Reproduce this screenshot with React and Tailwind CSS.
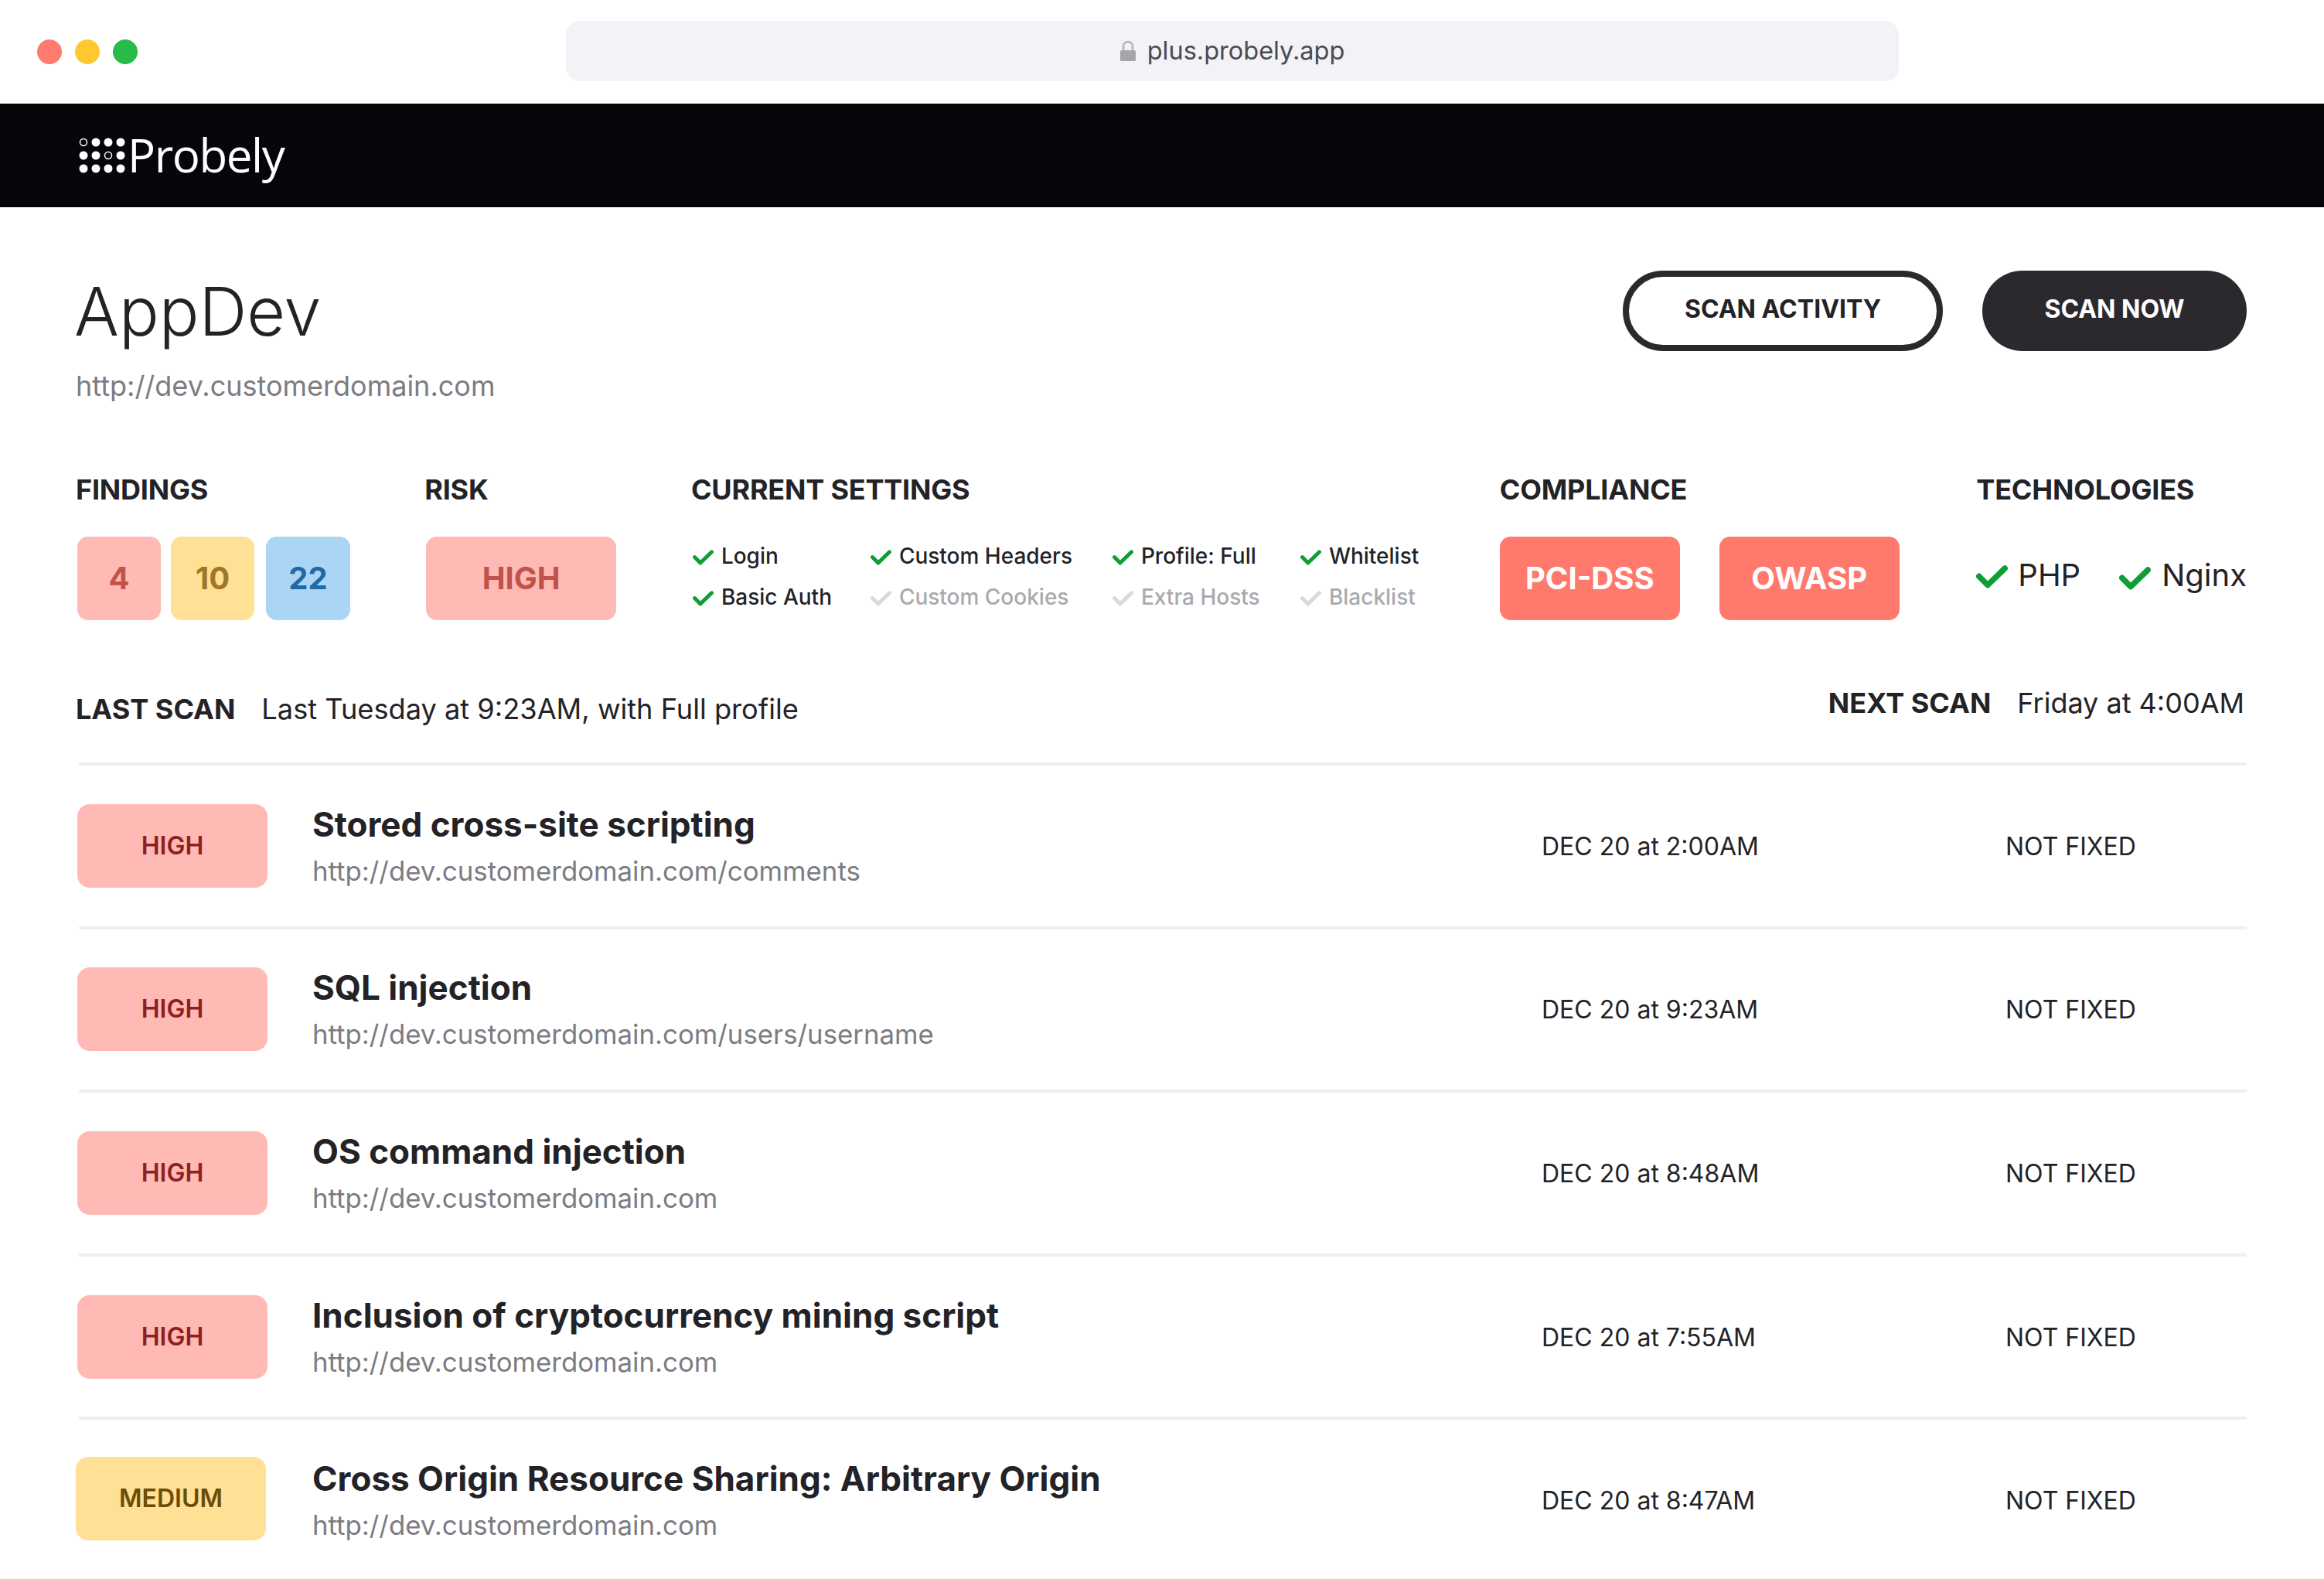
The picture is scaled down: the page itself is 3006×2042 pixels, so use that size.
const findings = [
  { title: "Stored cross-site scripting", url: "http://dev.customerdomain.com/comments", date: "DEC 20 at 2:00AM" },
  { title: "SQL injection", url: "http://dev.customerdomain.com/users/username", date: "DEC 20 at 9:23AM" },
  { title: "OS command injection", url: "http://dev.customerdomain.com", date: "DEC 20 at 8:48AM" },
  { title: "Inclusion of cryptocurrency mining script", url: "http://dev.customerdomain.com", date: "DEC 20 at 7:55AM" },
  { title: "Cross Origin Resource Sharing: Arbitrary Origin", url: "http://dev.customerdomain.com", date: "DEC 20 at 8:47AM", medium: true },
];

const settings = [
  { width: "w-[230px]", items: [{ label: "Login", on: true }, { label: "Basic Auth", on: true }] },
  { width: "w-[313px]", items: [{ label: "Custom Headers", on: true }, { label: "Custom Cookies", on: false }] },
  { width: "w-[243px]", items: [{ label: "Profile: Full", on: true }, { label: "Extra Hosts", on: false }] },
  { width: "w-[200px]", items: [{ label: "Whitelist", on: true }, { label: "Blacklist", on: false }] },
];

const Check = ({ on = true, className }) => (
  <svg viewBox="0 0 41 30" className={className}>
    <path
      d="M3.8 14.3 L15 25.6 L37.2 4"
      fill="none"
      stroke={on ? "#0f9d35" : "#d9d9dd"}
      strokeWidth="7.5"
      strokeLinecap="round"
      strokeLinejoin="round"
    />
  </svg>
);

const Logo = () => {
  const xs = [108, 124, 140, 156];
  const ys = [183, 200, 217];
  return (
    <svg viewBox="100 176 64 48" className="w-[64px] h-[48px]">
      {ys.map((y) =>
        xs.map((x) => {
          const hollow = (x === 108 && y === 183) || (x === 140 && y === 200);
          return hollow ? (
            <circle key={x + "-" + y} cx={x} cy={y} r="4.5" fill="none" stroke="#fff" strokeWidth="1.5" />
          ) : (
            <circle key={x + "-" + y} cx={x} cy={y} r="5.5" fill="#fff" />
          );
        })
      )}
    </svg>
  );
};

const StatLabel = ({ children }) => (
  <div className="text-[36px] leading-[44px] font-bold tracking-[-0.2px] text-[#232226]">{children}</div>
);

const Badge = ({ className, children }) => (
  <div className={"flex items-center justify-center h-[108px] rounded-[14px] font-bold " + className}>{children}</div>
);

export default function App() {
  return (
    <div className="w-[3006px] h-[2042px] overflow-hidden bg-white text-[#232226] font-['Inter',sans-serif]">
      <div className="flex items-center h-[134px] pl-[48px]">
        <div className="flex items-center gap-[17px]">
          <div className="w-[32px] h-[32px] rounded-full bg-[#ff7b6e]"></div>
          <div className="w-[32px] h-[32px] rounded-full bg-[#ffc830]"></div>
          <div className="w-[32px] h-[32px] rounded-full bg-[#27bb48]"></div>
        </div>
        <div className="flex items-center justify-center gap-[15px] ml-[554px] w-[1724px] h-[78px] -mt-[2px] rounded-[18px] bg-[#f2f2f7]">
          <svg viewBox="0 0 20 26" className="w-[20px] h-[26px]">
            <path d="M4 13 V7 a6 6 0 0 1 12 0 V13" fill="none" stroke="#b0b0b5" strokeWidth="2.4" />
            <rect x="0" y="12" width="20" height="14" rx="1.5" fill="#a5a5aa" />
          </svg>
          <span className="text-[32.5px] leading-[40px] text-[#4a4a50]">plus.probely.app</span>
        </div>
      </div>

      <div className="flex items-center gap-[1px] h-[134px] pl-[100px] bg-[#060509]">
        <Logo />
        <span className="text-[60px] leading-[72px] text-white font-['Open_Sans',sans-serif] tracking-[-1.4px] -mt-[2px]">Probely</span>
      </div>

      <div className="pl-[98px] pr-[100px]">
        <div className="flex justify-between items-start">
          <div className="pt-[85px]">
            <h1 className="text-[86px] leading-[100px] font-light -ml-[2px]">AppDev</h1>
            <div className="mt-[24px] text-[36px] leading-[44px] text-[#7c7c82]">http://dev.customerdomain.com</div>
          </div>
          <div className="flex gap-[51px] pt-[82px]">
            <button className="w-[414px] h-[104px] pb-[4px] rounded-full border-[8px] border-[#2b292d] text-[32px] font-bold">SCAN ACTIVITY</button>
            <button className="w-[342px] h-[104px] pb-[4px] rounded-full bg-[#2b292d] text-white text-[32px] font-bold">SCAN NOW</button>
          </div>
        </div>

        <div className="flex mt-[90px]">
          <div className="w-[453px]">
            <StatLabel>FINDINGS</StatLabel>
            <div className="flex gap-[13px] mt-[39px] ml-[2px] text-[40px]">
              <Badge className="w-[108px] bg-[#ffbab5] text-[#c0524b]">4</Badge>
              <Badge className="w-[108px] bg-[#ffe094] text-[#a0762a]">10</Badge>
              <Badge className="w-[109px] ml-[2px] bg-[#abd5f5] text-[#1f6aa5]">22</Badge>
            </div>
          </div>
          <div className="w-[346px]">
            <StatLabel>RISK</StatLabel>
            <Badge className="w-[246px] mt-[39px] ml-[2px] bg-[#ffbab5] text-[#c0524b] text-[40px]">HIGH</Badge>
          </div>
          <div className="w-[1050px]">
            <StatLabel>CURRENT SETTINGS</StatLabel>
            <div className="flex mt-[39px] pt-[3px] pl-[2px]">
              {settings.map((col) => (
                <div key={col.items[0].label} className={col.width + " flex flex-col gap-[9px]"}>
                  {col.items.map((item) => (
                    <div key={item.label} className={"flex items-center gap-[10px] text-[28px] leading-[44px] font-medium " + (item.on ? "" : "text-[#a9a9ae]")}>
                      <Check on={item.on} className="w-[27px] h-[20px] mt-[4px]" />
                      {item.label}
                    </div>
                  ))}
                </div>
              ))}
            </div>
          </div>
          <div className="w-[619px]">
            <StatLabel>COMPLIANCE</StatLabel>
            <div className="flex gap-[51px] mt-[39px] text-white text-[40px]">
              <Badge className="w-[233px] bg-[#ff7a6d]">PCI-DSS</Badge>
              <Badge className="w-[233px] bg-[#ff7a6d]">OWASP</Badge>
            </div>
          </div>
          <div>
            <StatLabel>TECHNOLOGIES</StatLabel>
            <div className="flex items-center mt-[39px] pt-[26px] text-[40px] leading-[48px]">
              <Check className="w-[41px] h-[30px] mt-[4px]" />
              <span className="ml-[13px]">PHP</span>
              <Check className="w-[41px] h-[30px] mt-[8px] ml-[50px]" />
              <span className="ml-[14px]">Nginx</span>
            </div>
          </div>
        </div>

        <div className="flex justify-between mt-[85px] mb-[47px] text-[36px] leading-[44px]">
          <div className="flex gap-[34px] mt-[8px]">
            <span className="font-bold">LAST SCAN</span>
            <span className="text-[36.2px]">Last Tuesday at 9:23AM, with Full profile</span>
          </div>
          <div className="flex gap-[34px] pr-[3px]">
            <span className="font-bold">NEXT SCAN</span>
            <span>Friday at 4:00AM</span>
          </div>
        </div>

        <div className="ml-[4px]">
          {findings.map((f) => (
            <div key={f.title} className="flex items-center h-[211.6px] border-t-[4px] border-[#efeff1]">
              <div
                className={
                  "flex items-center justify-center w-[246px] h-[108px] rounded-[16px] text-[32px] font-semibold " +
                  (f.medium ? "-ml-[4px] mr-[2px] bg-[#ffe094] text-[#6b4d08] -translate-y-[2px]" : "-ml-[2px] bg-[#ffbab5] text-[#8f2020]")
                }
              >
                {f.medium ? "MEDIUM" : "HIGH"}
              </div>
              <div className="w-[1590px] ml-[58px]">
                <div className="text-[44px] leading-[54px] font-bold -mt-[1px]">{f.title}</div>
                <div className="mt-[11px] text-[34.8px] leading-[44px] text-[#7c7c82]">{f.url}</div>
              </div>
              <div className="w-[600px] pt-[2px] text-[32px] leading-[40px]">{f.date}</div>
              <div className="pt-[2px] text-[32px] leading-[40px]">NOT FIXED</div>
            </div>
          ))}
        </div>
      </div>
    </div>
  );
}
